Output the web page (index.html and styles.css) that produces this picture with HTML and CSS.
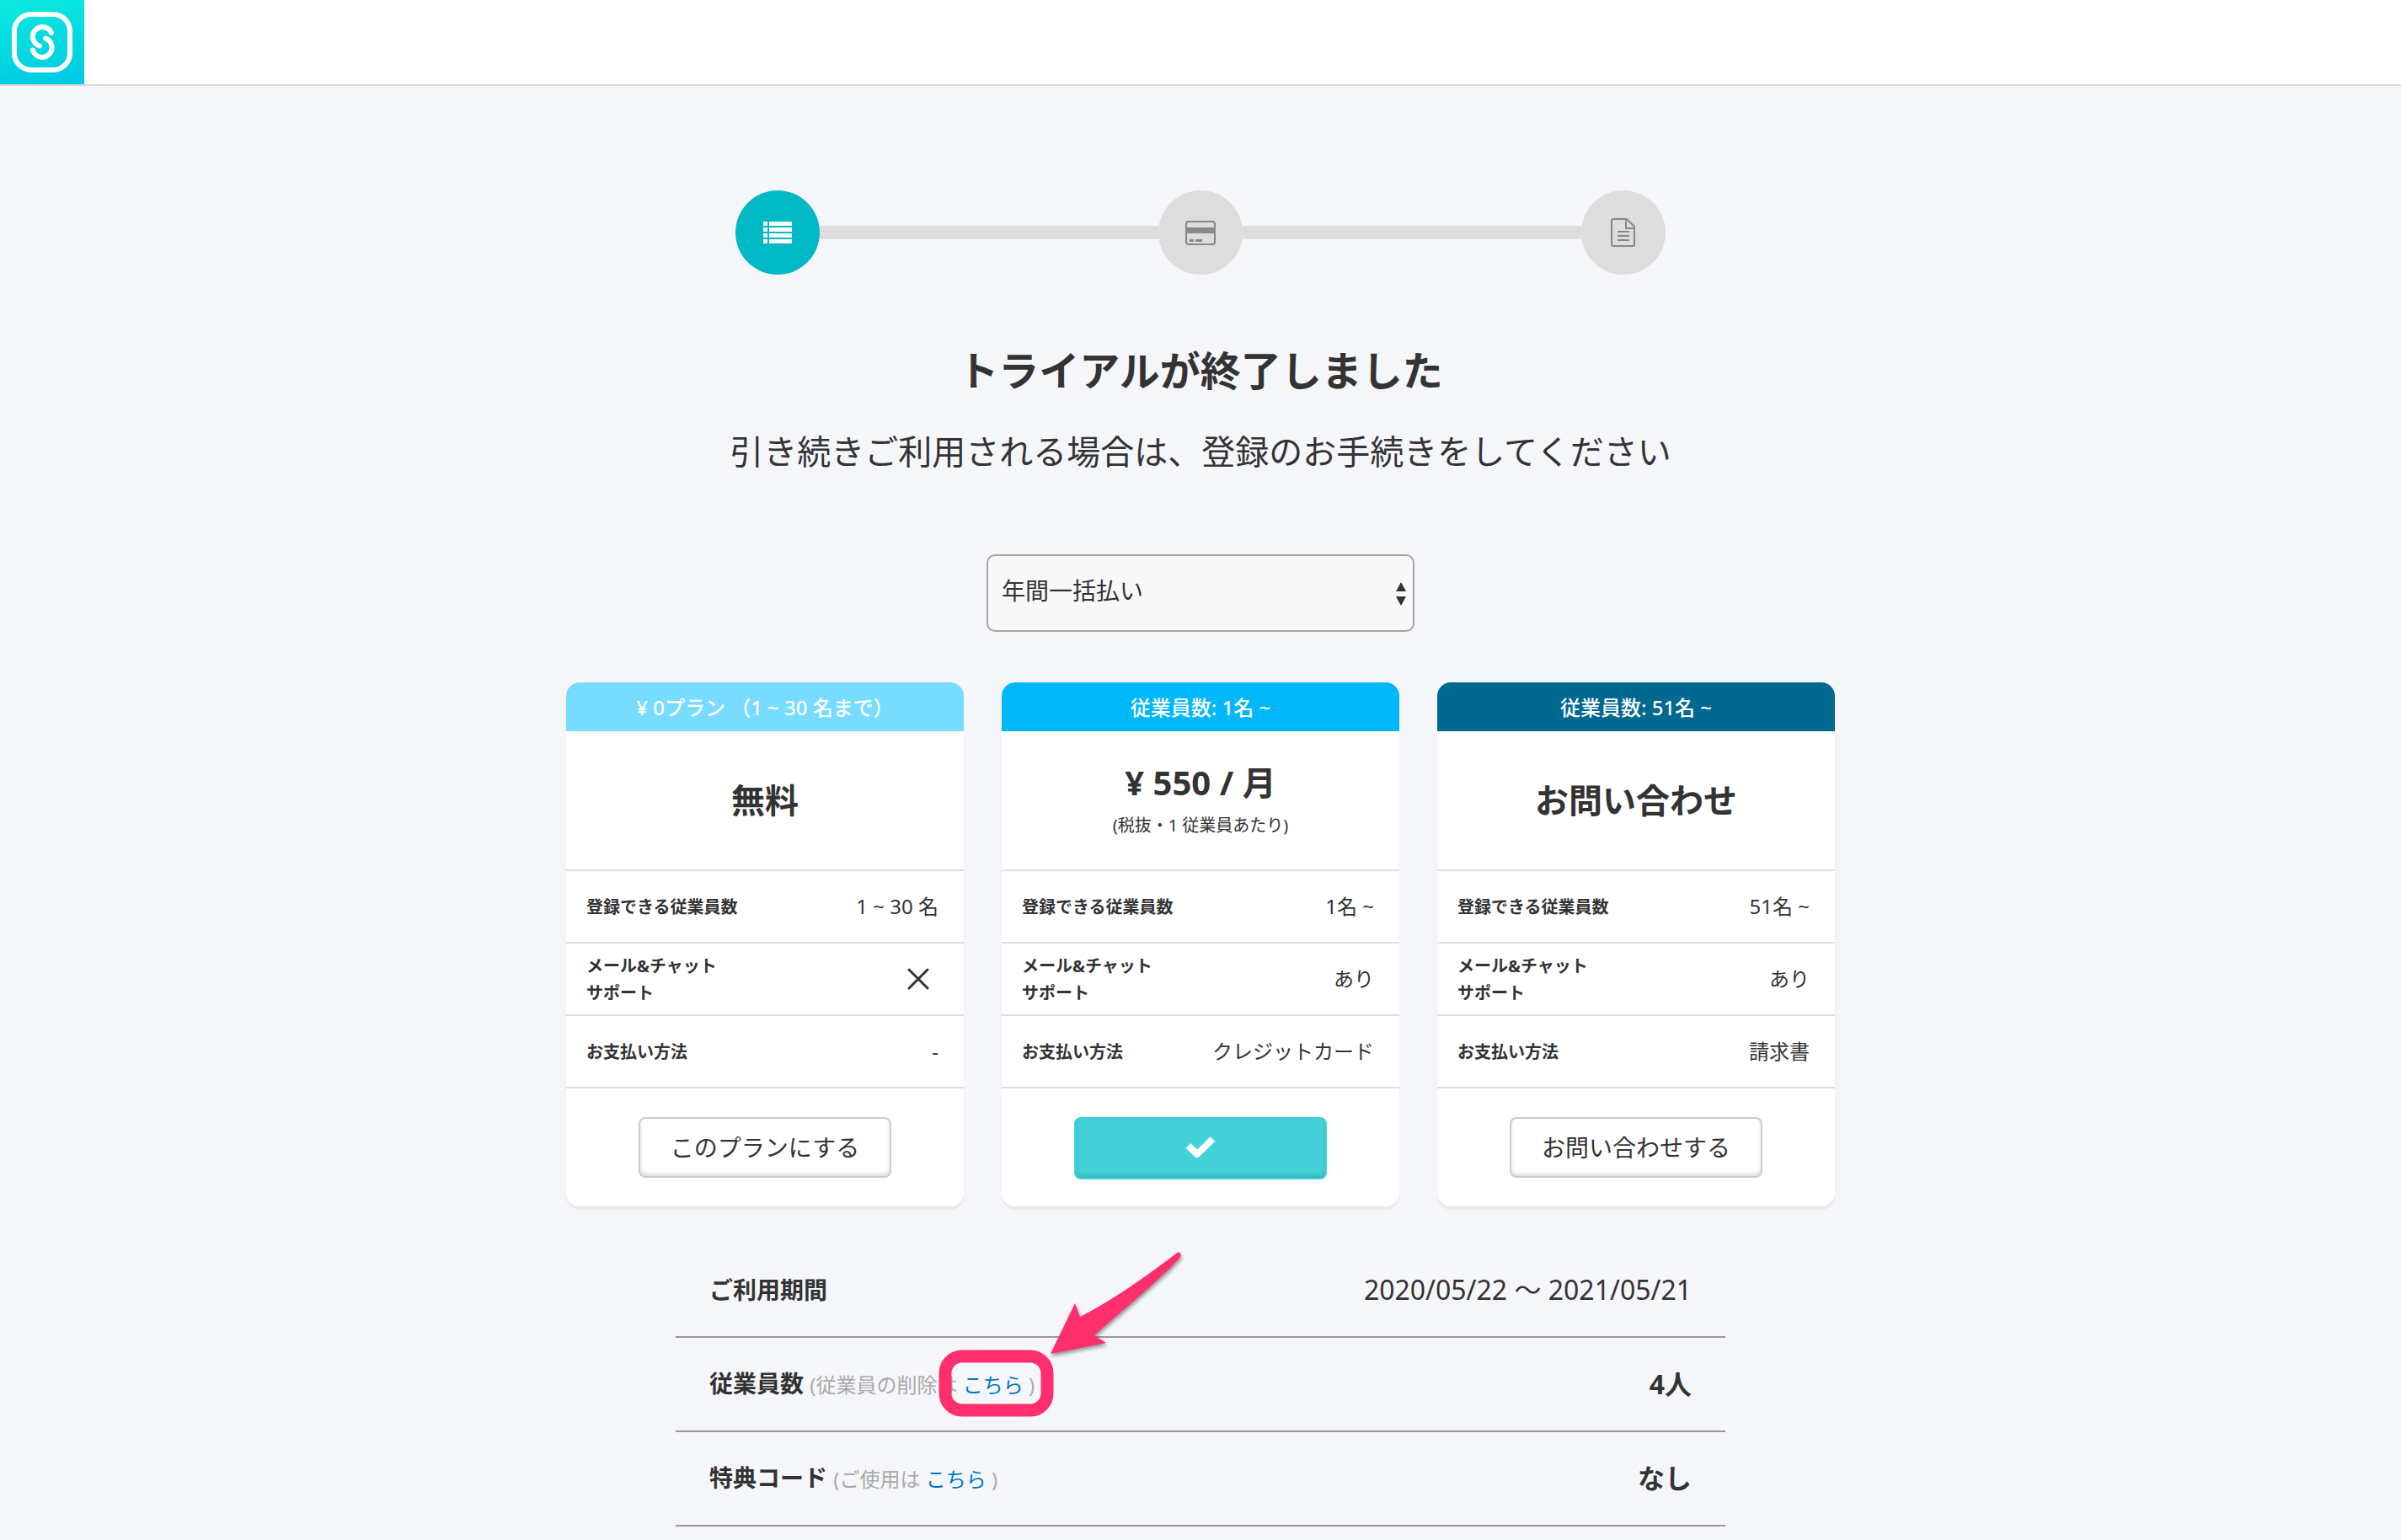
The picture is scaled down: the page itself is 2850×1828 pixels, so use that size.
FILE: index.html
```html
<!DOCTYPE html>
<html lang="ja">
<head>
<meta charset="utf-8">
<meta name="viewport" content="width=device-width, initial-scale=1">
<title>トライアルが終了しました</title>
<link rel="stylesheet" href="styles.css">
</head>
<body>
<header class="topbar">
  <a class="logo" href="#" aria-label="ホーム">
    <svg viewBox="0 0 100 100" aria-hidden="true">
      <defs><linearGradient id="logo-bg" x1="0.4" y1="0" x2="0.6" y2="1"><stop offset="0" stop-color="#0ae8e0"/><stop offset="1" stop-color="#00cbe2"/></linearGradient></defs>
      <rect width="100" height="100" fill="url(#logo-bg)"/>
      <g fill="none" stroke="#fff" stroke-width="6" stroke-linecap="round">
        <rect x="17" y="17" width="66" height="66" rx="20"/>
        <path d="M61 39A11.5 11.5 0 1 0 47 54.5"/>
        <path d="M54 45.500A11.5 11.5 0 1 1 39 59.5"/>
      </g>
    </svg>
  </a>
</header>
<main class="page">
  <ol class="steps">
    <li class="step step-current" aria-label="プラン選択">
      <svg viewBox="0 0 36 28" width="36" height="28" fill="#fff" aria-hidden="true">
        <path d="M1 1h5v5H1zM8 1h27v5H8zM1 8h5v5H1zM8 8h27v5H8zM1 15h5v5H1zM8 15h27v5H8zM1 22h5v5H1zM8 22h27v5H8z"/>
      </svg>
    </li>
    <li class="bar" aria-hidden="true"></li>
    <li class="step" aria-label="お支払い">
      <svg viewBox="0 0 36 30" width="36" height="30" aria-hidden="true">
        <rect x="1" y="2" width="34" height="27" rx="3" fill="none" stroke="#888" stroke-width="2"/>
        <path d="M1 9h34v7H1zM5 23h5v3H5zM12 23h8v3h-8z" fill="#888"/>
      </svg>
    </li>
    <li class="bar" aria-hidden="true"></li>
    <li class="step" aria-label="完了">
      <svg viewBox="0 0 30 34" width="30" height="34" fill="none" stroke="#888" stroke-width="2" aria-hidden="true">
        <path d="M3 1h16l9 9v21a2 2 0 0 1-2 2H3a2 2 0 0 1-2-2V3a2 2 0 0 1 2-2zM18 1v11h10M8 16h14M8 21h14M8 26h14"/>
      </svg>
    </li>
  </ol>

  <h1 class="title">トライアルが終了しました</h1>
  <p class="lead">引き続きご利用される場合は、登録のお手続きをしてください</p>

  <div class="select-box">
    <select class="select" aria-label="お支払いサイクル">
      <option>年間一括払い</option>
    </select>
    <svg class="select-arrows" viewBox="0 0 14 28" width="14" height="28" fill="#333" aria-hidden="true"><path d="M7 0l6 11H1zM7 28l6-11H1z"/></svg>
  </div>

  <div class="plans">
    <section class="plan">
      <h2 class="plan-head head-free">¥ 0プラン （1 ~ 30 名まで）</h2>
      <div class="plan-price"><p class="price">無料</p></div>
      <dl class="specs">
        <div class="spec"><dt>登録できる従業員数</dt><dd>1 ~ 30 名</dd></div>
        <div class="spec"><dt>メール&amp;チャット<br>サポート</dt><dd><svg class="cross" viewBox="0 0 26 26" width="26" height="26" role="img" aria-label="なし"><path d="M2 2l22 22M24 2L2 24" stroke="#333" stroke-width="3" stroke-linecap="round"/></svg></dd></div>
        <div class="spec"><dt>お支払い方法</dt><dd>-</dd></div>
      </dl>
      <div class="plan-foot"><button class="btn" type="button">このプランにする</button></div>
    </section>
    <section class="plan">
      <h2 class="plan-head head-paid">従業員数: 1名 ~</h2>
      <div class="plan-price"><p class="price">¥ 550 / 月</p><p class="price-note">(税抜・1 従業員あたり)</p></div>
      <dl class="specs">
        <div class="spec"><dt>登録できる従業員数</dt><dd>1名 ~</dd></div>
        <div class="spec"><dt>メール&amp;チャット<br>サポート</dt><dd>あり</dd></div>
        <div class="spec"><dt>お支払い方法</dt><dd>クレジットカード</dd></div>
      </dl>
      <div class="plan-foot"><button class="btn btn-chosen" type="button" aria-label="選択中"><svg viewBox="0 0 36 28" width="36" height="28" fill="none" stroke="#fff" stroke-width="8" stroke-linejoin="round" aria-hidden="true"><path d="M3.500 13l10.500 10L32.500 5"/></svg></button></div>
    </section>
    <section class="plan">
      <h2 class="plan-head head-contact">従業員数: 51名 ~</h2>
      <div class="plan-price"><p class="price">お問い合わせ</p></div>
      <dl class="specs">
        <div class="spec"><dt>登録できる従業員数</dt><dd>51名 ~</dd></div>
        <div class="spec"><dt>メール&amp;チャット<br>サポート</dt><dd>あり</dd></div>
        <div class="spec"><dt>お支払い方法</dt><dd>請求書</dd></div>
      </dl>
      <div class="plan-foot"><button class="btn" type="button">お問い合わせする</button></div>
    </section>
  </div>

  <dl class="summary">
    <div class="summary-row"><dt>ご利用期間</dt><dd class="period">2020/05/22 〜 2021/05/21</dd></div>
    <div class="summary-row">
      <dt>従業員数 <span class="hint">(従業員の削除は <a href="#">こちら</a> )</span></dt><dd>4人</dd>
      <svg class="callout" viewBox="0 0 300 210" width="300" height="210" aria-hidden="true">
        <rect x="20" y="130" width="121" height="64" rx="20" fill="none" stroke="#ff2e6c" stroke-width="15"/>
        <path class="arrow" d="M294 8Q297 5 299.500 8Q300 10 299 12C283 32 218 86 197 105L211 114L145 127L174 67L180 83Q226 60 294 8z"/>
      </svg>
    </div>
    <div class="summary-row"><dt>特典コード <span class="hint">(ご使用は <a href="#">こちら</a> )</span></dt><dd>なし</dd></div>
  </dl>
</main>
</body>
</html>
```
FILE: styles.css
```css
* { box-sizing: border-box; }

body {
  margin: 0;
  background: #f5f6fa;
  color: #333;
  font-family: "Noto Sans", "Noto Sans CJK JP", sans-serif;
  font-size: 24px;
  line-height: 36px;
}

h1, h2, p, dl, dd, ol { margin: 0; padding: 0; }

a { color: #0077c7; text-decoration: none; }

.topbar {
  display: flex;
  background: #fff;
  border-bottom: 2px solid #d9d9dc;
}

.logo, .logo svg { display: block; width: 100px; height: 100px; }

.page {
  display: flex;
  flex-direction: column;
  align-items: center;
  padding-top: 124px;
}

.steps {
  display: flex;
  align-items: center;
  width: 100%;
  max-width: 1104px;
  list-style: none;
}

.step {
  display: flex;
  align-items: center;
  justify-content: center;
  flex: none;
  width: 100px;
  height: 100px;
  border-radius: 50%;
  background: #ddd;
}

.step-current { background: #00b9c4; }

.bar { flex: 1; height: 16px; background: #ddd; }

.title {
  margin-top: 78px;
  font-size: 48px;
  line-height: 72px;
}

.lead {
  margin-top: 30px;
  font-size: 40px;
  line-height: 60px;
}

.select-box {
  position: relative;
  width: 508px;
  margin-top: 92px;
}

.select {
  display: block;
  width: 100%;
  height: 92px;
  padding: 0 16px 6px;
  appearance: none;
  border: 2px solid #a5a5a5;
  border-radius: 10px;
  background: #f8f8f8;
  color: #333;
  font: inherit;
  font-size: 28px;
}

.select-arrows { position: absolute; right: 9px; top: 33px; }

.plans {
  display: grid;
  grid-template-columns: repeat(3, 1fr);
  gap: 45px;
  width: 100%;
  max-width: 1506px;
  margin-top: 60px;
}

.plan {
  overflow: hidden;
  border-radius: 16px;
  background: #fff;
  box-shadow: 0 4px 2px #e8e9ed;
}

.plan-head {
  padding: 12px 0 10px;
  color: #fff;
  font-size: 24px;
  font-weight: 500;
  line-height: 36px;
  text-align: center;
}

.head-free { background: #77dcff; }
.head-paid { background: #00b7f9; }
.head-contact { background: #00698f; }

.plan-price {
  display: flex;
  flex-direction: column;
  align-items: center;
  justify-content: center;
  height: 164px;
}

.price { font-size: 40px; font-weight: 700; line-height: 60px; }
.price-note { font-size: 20px; line-height: 42px; }

.spec {
  display: flex;
  align-items: center;
  justify-content: space-between;
  height: 86px;
  padding: 0 30px 0 24px;
  border-top: 2px solid #ddd;
}

.spec dt { padding-top: 2px; font-size: 20px; font-weight: 700; line-height: 32px; }

.cross { display: block; margin-right: 11px; }

.plan-foot {
  display: flex;
  justify-content: center;
  align-items: flex-start;
  height: 142px;
  padding-top: 34px;
  border-top: 2px solid #ddd;
}

.btn {
  display: flex;
  align-items: center;
  justify-content: center;
  width: 300px;
  height: 72px;
  padding: 0;
  border: 2px solid #ccc;
  border-radius: 8px;
  background: #fff;
  box-shadow: inset 0 -3px 5px #ddd;
  color: #333;
  font: inherit;
  font-size: 28px;
}

.btn-chosen {
  height: 74px;
  padding-bottom: 4px;
  border-color: #44d0d6;
  background: #44d2d9;
  box-shadow: inset 0 -3px 5px #3ab3b9;
}

.summary {
  width: 100%;
  max-width: 1246px;
  margin-top: 44px;
}

.summary-row {
  position: relative;
  display: flex;
  align-items: center;
  justify-content: space-between;
  height: 112px;
  padding: 0 40px;
  border-bottom: 2px solid #999;
}

.summary-row dt { font-size: 28px; font-weight: 700; }
.summary-row dd { font-size: 32px; font-weight: 700; }
.summary-row .period { font-weight: 400; }

.hint { color: #aaa; font-size: 24px; font-weight: 400; }

.callout {
  position: absolute;
  left: 300px;
  top: -108px;
  overflow: visible;
}

.arrow {
  fill: #ff2e6c;
  filter: drop-shadow(1px 3px 2px rgba(0, 0, 0, .4));
}
```
